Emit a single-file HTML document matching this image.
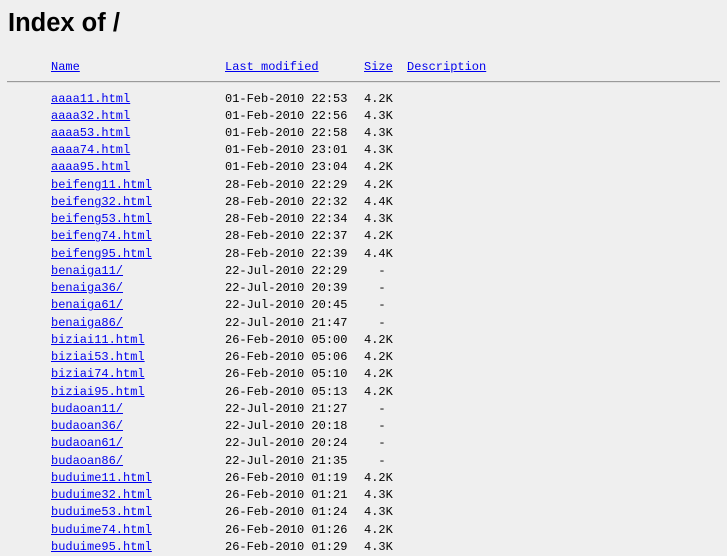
<!DOCTYPE html>
<html><head><meta charset="utf-8"><style>
body{margin:0;background:#efefef;width:727px;height:545px;overflow:hidden;position:relative;font-family:"Liberation Mono",monospace;font-size:12px;color:#000}
h1{position:absolute;left:8px;top:9px;margin:0;font:bold 25.5px "Liberation Sans",sans-serif;}
.w{position:absolute;left:0;top:1px;width:727px}
.r{position:absolute;left:0;height:17px;line-height:17px;white-space:pre;width:727px}
.r span{position:absolute;top:0}
a{color:#00e;text-decoration:underline}
.n{left:51px}.d{left:225px}.s{left:364px}.x{left:407px}
.hr{position:absolute;left:7px;width:713px;top:81px;height:0;border-top:1px solid #9a9a9a;border-bottom:1px solid #e0e0e0}
</style></head><body>
<h1>Index of /</h1>
<div class="hr"></div>
<div class="w">
<div class="r" style="top:58px"><span class="n"><a>Name</a></span><span class="d"><a>Last modified</a></span><span class="s"><a>Size</a></span><span class="x"><a>Description</a></span></div>
<div class="r" style="top:89.5px"><span class="n"><a>aaaa11.html</a></span><span class="d">01-Feb-2010 22:53</span><span class="s">4.2K</span></div>
<div class="r" style="top:106.7px"><span class="n"><a>aaaa32.html</a></span><span class="d">01-Feb-2010 22:56</span><span class="s">4.3K</span></div>
<div class="r" style="top:124px"><span class="n"><a>aaaa53.html</a></span><span class="d">01-Feb-2010 22:58</span><span class="s">4.3K</span></div>
<div class="r" style="top:141.2px"><span class="n"><a>aaaa74.html</a></span><span class="d">01-Feb-2010 23:01</span><span class="s">4.3K</span></div>
<div class="r" style="top:158.4px"><span class="n"><a>aaaa95.html</a></span><span class="d">01-Feb-2010 23:04</span><span class="s">4.2K</span></div>
<div class="r" style="top:175.7px"><span class="n"><a>beifeng11.html</a></span><span class="d">28-Feb-2010 22:29</span><span class="s">4.2K</span></div>
<div class="r" style="top:192.9px"><span class="n"><a>beifeng32.html</a></span><span class="d">28-Feb-2010 22:32</span><span class="s">4.4K</span></div>
<div class="r" style="top:210.2px"><span class="n"><a>beifeng53.html</a></span><span class="d">28-Feb-2010 22:34</span><span class="s">4.3K</span></div>
<div class="r" style="top:227.4px"><span class="n"><a>beifeng74.html</a></span><span class="d">28-Feb-2010 22:37</span><span class="s">4.2K</span></div>
<div class="r" style="top:244.7px"><span class="n"><a>beifeng95.html</a></span><span class="d">28-Feb-2010 22:39</span><span class="s">4.4K</span></div>
<div class="r" style="top:261.9px"><span class="n"><a>benaiga11/</a></span><span class="d">22-Jul-2010 22:29</span><span class="s">  -</span></div>
<div class="r" style="top:279.1px"><span class="n"><a>benaiga36/</a></span><span class="d">22-Jul-2010 20:39</span><span class="s">  -</span></div>
<div class="r" style="top:296.4px"><span class="n"><a>benaiga61/</a></span><span class="d">22-Jul-2010 20:45</span><span class="s">  -</span></div>
<div class="r" style="top:313.6px"><span class="n"><a>benaiga86/</a></span><span class="d">22-Jul-2010 21:47</span><span class="s">  -</span></div>
<div class="r" style="top:330.9px"><span class="n"><a>biziai11.html</a></span><span class="d">26-Feb-2010 05:00</span><span class="s">4.2K</span></div>
<div class="r" style="top:348.1px"><span class="n"><a>biziai53.html</a></span><span class="d">26-Feb-2010 05:06</span><span class="s">4.2K</span></div>
<div class="r" style="top:365.4px"><span class="n"><a>biziai74.html</a></span><span class="d">26-Feb-2010 05:10</span><span class="s">4.2K</span></div>
<div class="r" style="top:382.6px"><span class="n"><a>biziai95.html</a></span><span class="d">26-Feb-2010 05:13</span><span class="s">4.2K</span></div>
<div class="r" style="top:399.8px"><span class="n"><a>budaoan11/</a></span><span class="d">22-Jul-2010 21:27</span><span class="s">  -</span></div>
<div class="r" style="top:417.1px"><span class="n"><a>budaoan36/</a></span><span class="d">22-Jul-2010 20:18</span><span class="s">  -</span></div>
<div class="r" style="top:434.3px"><span class="n"><a>budaoan61/</a></span><span class="d">22-Jul-2010 20:24</span><span class="s">  -</span></div>
<div class="r" style="top:451.6px"><span class="n"><a>budaoan86/</a></span><span class="d">22-Jul-2010 21:35</span><span class="s">  -</span></div>
<div class="r" style="top:468.8px"><span class="n"><a>buduime11.html</a></span><span class="d">26-Feb-2010 01:19</span><span class="s">4.2K</span></div>
<div class="r" style="top:486.1px"><span class="n"><a>buduime32.html</a></span><span class="d">26-Feb-2010 01:21</span><span class="s">4.3K</span></div>
<div class="r" style="top:503.3px"><span class="n"><a>buduime53.html</a></span><span class="d">26-Feb-2010 01:24</span><span class="s">4.3K</span></div>
<div class="r" style="top:520.5px"><span class="n"><a>buduime74.html</a></span><span class="d">26-Feb-2010 01:26</span><span class="s">4.2K</span></div>
<div class="r" style="top:537.8px"><span class="n"><a>buduime95.html</a></span><span class="d">26-Feb-2010 01:29</span><span class="s">4.3K</span></div>
</div>
</body></html>
